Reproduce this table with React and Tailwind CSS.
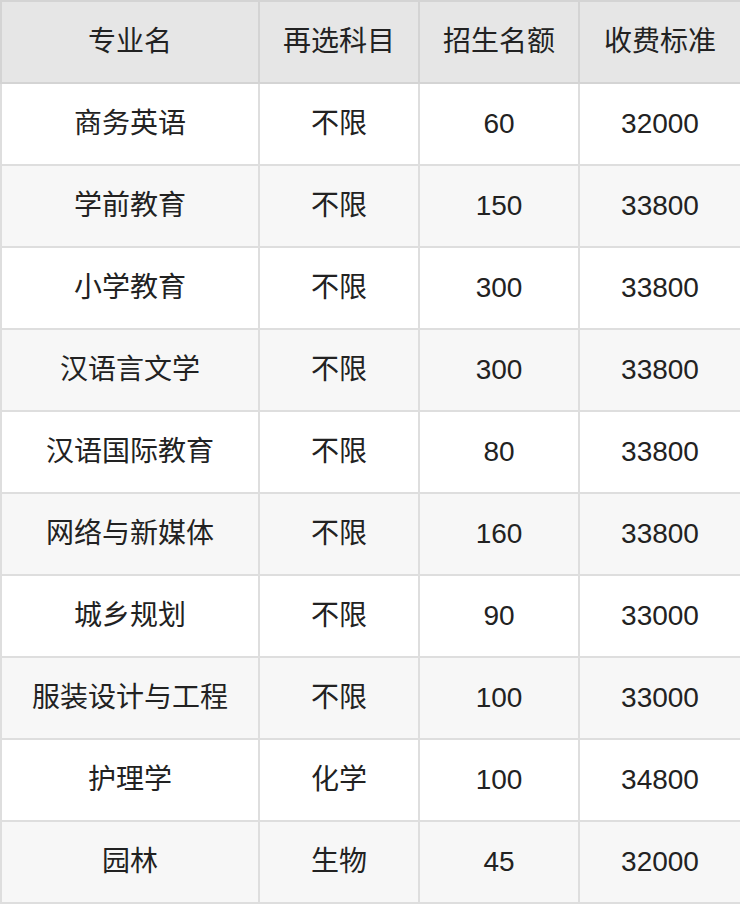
const rows = [
  ["商务英语", "不限", "60", "32000"],
  ["学前教育", "不限", "150", "33800"],
  ["小学教育", "不限", "300", "33800"],
  ["汉语言文学", "不限", "300", "33800"],
  ["汉语国际教育", "不限", "80", "33800"],
  ["网络与新媒体", "不限", "160", "33800"],
  ["城乡规划", "不限", "90", "33000"],
  ["服装设计与工程", "不限", "100", "33000"],
  ["护理学", "化学", "100", "34800"],
  ["园林", "生物", "45", "32000"],
];

const headers = ["专业名", "再选科目", "招生名额", "收费标准"];

export default function App() {
  return (
    <div
      className="w-[740px] bg-white text-[#222222]"
      style={{ fontFamily: '"Liberation Sans", "Noto Sans CJK SC", sans-serif' }}
    >
      <table className="w-full table-fixed border-collapse border-2 border-[#d4d4d4] text-center text-[28px]">
        <colgroup>
          <col className="w-[258px]" />
          <col className="w-[160px]" />
          <col className="w-[160px]" />
          <col className="w-[162px]" />
        </colgroup>
        <thead className="bg-[#e6e6e6]">
          <tr className="h-[82px]">
            {headers.map((h) => (
              <th key={h} className="border-2 border-[#d4d4d4] font-normal">
                {h}
              </th>
            ))}
          </tr>
        </thead>
        <tbody>
          {rows.map((row, i) => (
            <tr
              key={row[0]}
              className={`h-[82px] ${i % 2 === 1 ? "bg-[#f7f7f7]" : "bg-white"}`}
            >
              {row.map((cell, j) => (
                <td key={j} className="border-2 border-[#dedede]">
                  {cell}
                </td>
              ))}
            </tr>
          ))}
        </tbody>
      </table>
    </div>
  );
}
